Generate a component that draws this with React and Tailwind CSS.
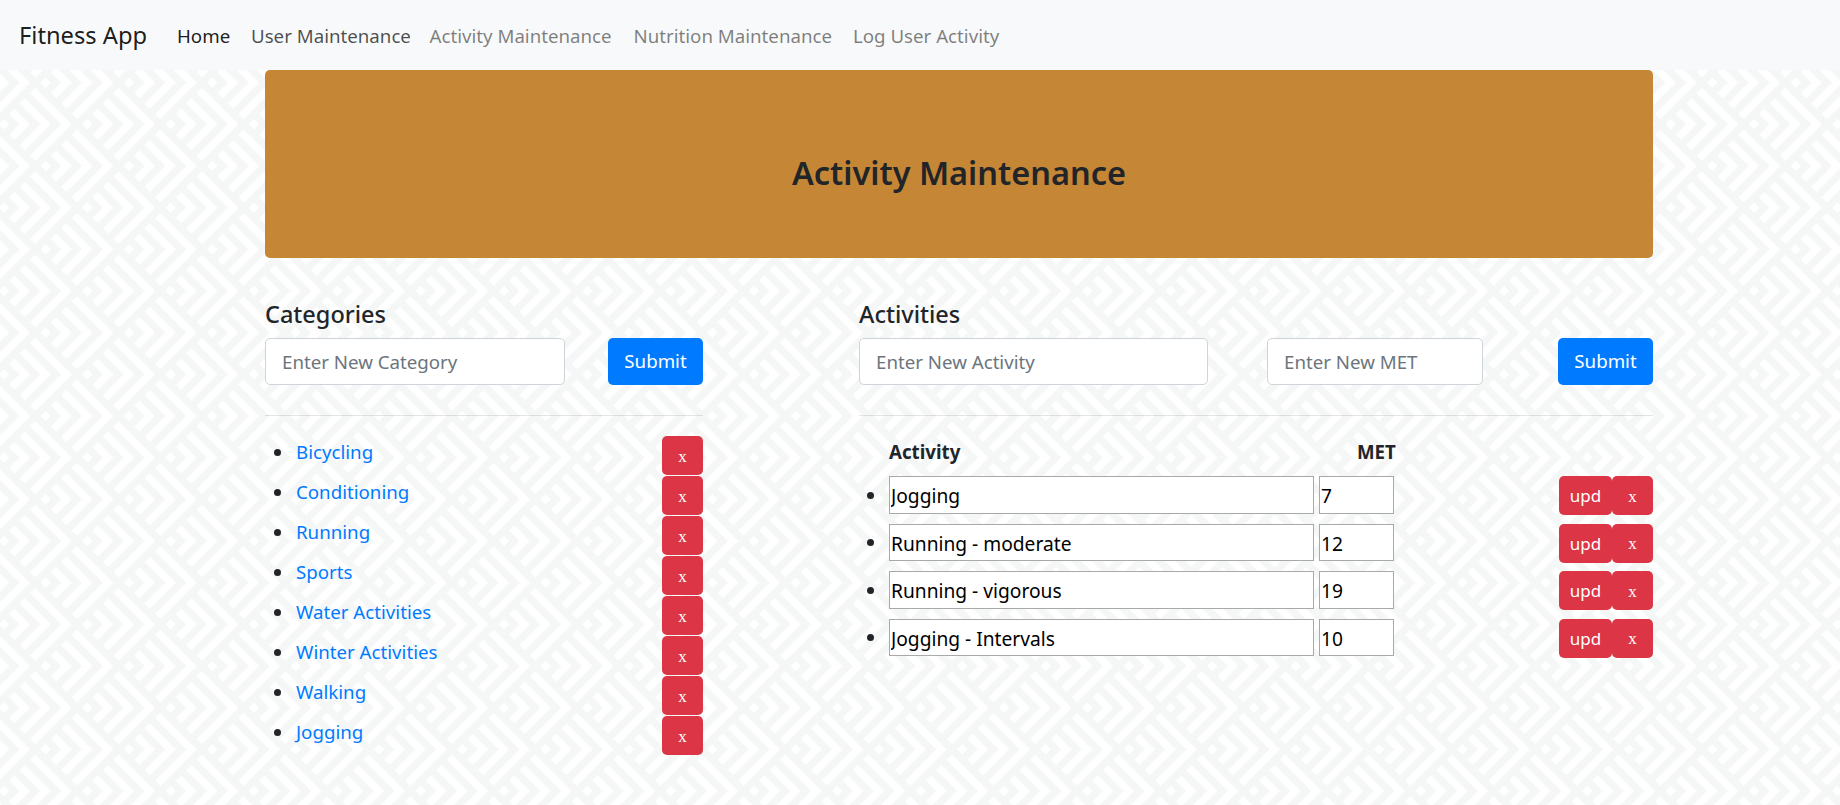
import React from "react";

const cats = ["Bicycling","Conditioning","Running","Sports","Water Activities","Winter Activities","Walking","Jogging"];
const acts = [["Jogging","7"],["Running - moderate","12"],["Running - vigorous","19"],["Jogging - Intervals","10"]];

const S = 14.7314;
function Pattern() {
  const p = (a, b) => `${((a + 0.5) * S).toFixed(3)} ${((b + 0.5) * S).toFixed(3)}`;
  const ls = [0,1,2,3].map(k => `M${p(-.25,k-.25)}L${p(k-.25,k-.25)}L${p(k-.25,-.25)}L${p(k+.25,-.25)}L${p(k+.25,k+.25)}L${p(-.25,k+.25)}Z`).join("");
  const W = S * 4;
  const ox = 87.33 - 0.5 * S * 0.7071 * 2;
  const oy = 124.33;
  return (
    <svg className="absolute inset-0 w-full h-full" aria-hidden="true">
      <defs>
        <pattern id="bgp" patternUnits="userSpaceOnUse" x="0" y="0" width={W} height={W}
          patternTransform={`matrix(.70711 .70711 .70711 -.70711 ${ox} ${oy})`}>
          <rect width={W} height={W} fill="#f5f7f7" />
          <path d={ls} fill="#ffffff" />
        </pattern>
      </defs>
      <rect width="100%" height="100%" fill="url(#bgp)" />
    </svg>
  );
}

function Bullet() {
  return <span className="w-[7px] h-[7px] rounded-full bg-[#212529] shrink-0" />;
}

function XBtn() {
  return (
    <button className="w-[41px] h-[39px] bg-[#dc3545] text-white rounded-[5px] text-[17px] leading-none font-['Liberation_Serif',serif] pt-[1px] shrink-0">x</button>
  );
}

export default function App() {
  return (
    <div className="relative h-[805px] overflow-hidden text-[18.7px] text-[#212529] font-['Noto_Sans',sans-serif]">
      <Pattern />
      <div className="relative">
        <nav className="h-[70px] bg-[#f8f9fa] flex items-center pl-[19px] pt-[2px]">
          <span className="text-[23.7px] text-black/90 w-[158px]">Fitness App</span>
          <span className="text-black/90 w-[74px]">Home</span>
          <span className="text-black/70 w-[178.5px]">User Maintenance</span>
          <span className="text-black/50 w-[204px]">Activity Maintenance</span>
          <span className="text-black/50 w-[219.5px]">Nutrition Maintenance</span>
          <span className="text-black/50">Log User Activity</span>
        </nav>
        <main className="ml-[265px] w-[1388px]">
          <div className="h-[188px] bg-[#c58735] rounded-[5px] flex items-center justify-center pt-[18px]">
            <h1 className="text-[32.5px] font-semibold leading-none">Activity Maintenance</h1>
          </div>
          <div className="flex justify-between mt-[42px]">
            <section className="w-[438px]">
              <h2 className="text-[23.5px] font-medium leading-[29px] mb-[9px]">Categories</h2>
              <div className="flex justify-between h-[47px]">
                <input placeholder="Enter New Category" className="w-[300px] h-full bg-white border border-[#ced4da] rounded-[5px] px-[16px] placeholder:text-[#6c757d] outline-none" />
                <button className="w-[95px] h-full bg-[#007bff] text-white rounded-[5px]">Submit</button>
              </div>
              <div className="h-px bg-black/10 mt-[30px] mb-[20px]" />
              <ul>
                {cats.map(c => (
                  <li key={c} className="h-[40px] flex items-start">
                    <span className="w-[31px] h-[32px] flex items-center pl-[9px]"><Bullet /></span>
                    <a className="flex-1 text-[#007bff] leading-[32px]">{c}</a>
                    <XBtn />
                  </li>
                ))}
              </ul>
            </section>
            <section className="w-[794px]">
              <h2 className="text-[23.5px] font-medium leading-[29px] mb-[9px]">Activities</h2>
              <div className="flex justify-between h-[47px]">
                <input placeholder="Enter New Activity" className="w-[349px] h-full bg-white border border-[#ced4da] rounded-[5px] px-[16px] placeholder:text-[#6c757d] outline-none" />
                <input placeholder="Enter New MET" className="w-[216px] ml-[59px] h-full bg-white border border-[#ced4da] rounded-[5px] px-[16px] placeholder:text-[#6c757d] outline-none" />
                <button className="w-[95px] ml-auto h-full bg-[#007bff] text-white rounded-[5px]">Submit</button>
              </div>
              <div className="h-px bg-black/10 mt-[30px] mb-[20px]" />
              <div className="h-[40px] flex font-bold leading-[32px] pl-[30px]">
                <span className="w-[468px]">Activity</span>
                <span>MET</span>
              </div>
              <ul>
                {acts.map(([n, m]) => (
                  <li key={n} className="h-[47.5px] flex items-start">
                    <span className="w-[30px] h-[38px] flex items-center pl-[8px]"><Bullet /></span>
                    <input defaultValue={n} className="w-[425px] h-[37.5px] bg-white border border-[#a9a9a9] pl-[1px] pr-[2px] pt-[2px] text-[19.2px] text-black outline-none" />
                    <input defaultValue={m} className="w-[75px] h-[37.5px] ml-[5px] bg-white border border-[#a9a9a9] pl-[1px] pr-[2px] pt-[2px] text-[19.2px] text-black outline-none" />
                    <button className="w-[53px] h-[39px] ml-auto bg-[#dc3545] text-white rounded-[5px] text-[17px] pt-[1px]">upd</button>
                    <XBtn />
                  </li>
                ))}
              </ul>
            </section>
          </div>
        </main>
      </div>
    </div>
  );
}
